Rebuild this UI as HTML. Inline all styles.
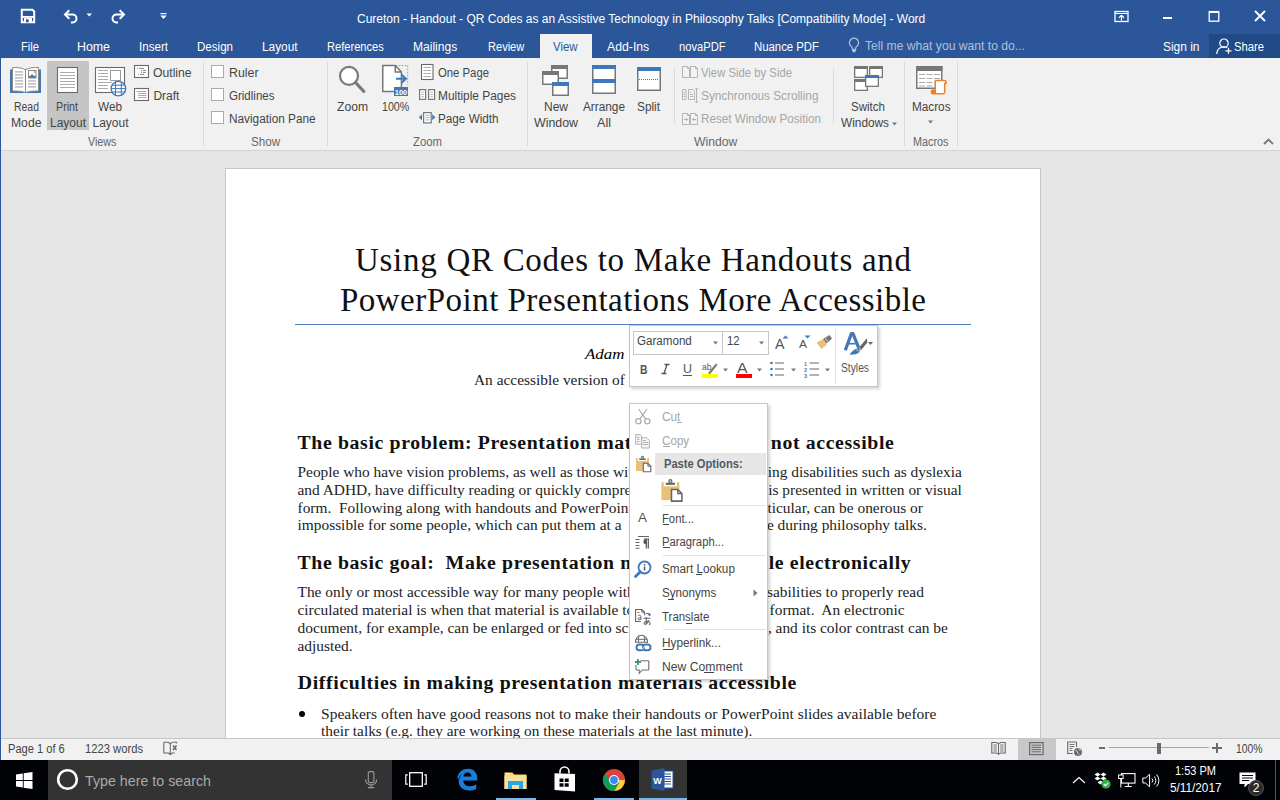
<!DOCTYPE html><html><head><meta charset="utf-8"><style>
html,body{margin:0;padding:0;width:1280px;height:800px;overflow:hidden;background:#fff;position:relative}
.t{position:absolute;white-space:pre;font-family:"Liberation Sans",sans-serif}
.r{position:absolute}
.s{position:absolute;overflow:visible}
</style></head><body>
<div class="r" style="left:0px;top:0px;width:1280px;height:58px;background:#2B579A;"></div>
<svg class="s" style="left:20px;top:8px" width="16" height="16" viewBox="0 0 16 16"><path d="M1.8 1.8h10.7l1.7 1.7v10.7H1.8z" fill="none" stroke="#fff" stroke-width="2"/><rect x="1" y="8" width="14" height="1.8" fill="#fff"/><rect x="4" y="10" width="8" height="5" fill="#fff"/><rect x="6" y="11.3" width="2.6" height="3" fill="#2B579A"/></svg><svg class="s" style="left:63px;top:8px" width="16" height="16" viewBox="0 0 16 16"><path d="M3 6.5h6.5a4 4 0 0 1 0 8H8" fill="none" stroke="#fff" stroke-width="2"/><path d="M6.3 2.2L2 6.5l4.3 4.3" fill="none" stroke="#fff" stroke-width="2"/></svg><svg class="s" style="left:86px;top:13px" width="7" height="4" viewBox="0 0 7 4"><path d="M0.5 0.5h5.5l-2.75 3z" fill="#fff"/></svg><svg class="s" style="left:110px;top:8px" width="16" height="16" viewBox="0 0 16 16"><path d="M13 6.5H6.5a4 4 0 0 0 0 8H8" fill="none" stroke="#fff" stroke-width="2"/><path d="M9.7 2.2L14 6.5l-4.3 4.3" fill="none" stroke="#fff" stroke-width="2"/></svg><svg class="s" style="left:160px;top:12px" width="7" height="8" viewBox="0 0 7 8"><rect x="0.5" y="1" width="6" height="1.2" fill="#fff"/><path d="M0.3 3.5h6.4l-3.2 3.4z" fill="#fff"/></svg>
<div class="t" style="left:357.00px;top:12.84px;font-size:12px;line-height:12px;color:#fff;font-family:'Liberation Sans', sans-serif;font-weight:normal;font-style:normal;">Cureton - Handout - QR Codes as an Assistive Technology in Philosophy Talks [Compatibility Mode] - Word</div>
<svg class="s" style="left:1114px;top:10px" width="15" height="12" viewBox="0 0 15 12"><rect x="1" y="1.5" width="13" height="10" fill="none" stroke="#fff" stroke-width="1.3"/><rect x="1" y="3" width="13" height="1" fill="#fff"/><path d="M7.5 5.2l-2.6 2.6M7.5 5.2l2.6 2.6M7.5 5.5v5" stroke="#fff" stroke-width="1.2" fill="none"/></svg><div class="r" style="left:1163px;top:17px;width:9px;height:2px;background:#fff;"></div><svg class="s" style="left:1208px;top:10px" width="12" height="12" viewBox="0 0 12 12"><rect x="1.2" y="1.6" width="9.6" height="9.6" fill="none" stroke="#fff" stroke-width="1.3"/><rect x="1" y="1" width="10" height="2" fill="#fff"/></svg><svg class="s" style="left:1254px;top:10px" width="12" height="12" viewBox="0 0 12 12"><path d="M1 1l10 10M11 1l-10 10" stroke="#fff" stroke-width="1.8"/></svg>
<div class="r" style="left:540px;top:34px;width:52px;height:24px;background:#F1F1F1;"></div>
<div class="t" style="left:21.00px;top:40.84px;font-size:12px;line-height:12px;color:#fff;font-family:'Liberation Sans', sans-serif;font-weight:normal;font-style:normal;transform:scaleX(0.9309);transform-origin:0 0;">File</div>
<div class="t" style="left:77.00px;top:40.84px;font-size:12px;line-height:12px;color:#fff;font-family:'Liberation Sans', sans-serif;font-weight:normal;font-style:normal;transform:scaleX(1.0309);transform-origin:0 0;">Home</div>
<div class="t" style="left:139.00px;top:40.84px;font-size:12px;line-height:12px;color:#fff;font-family:'Liberation Sans', sans-serif;font-weight:normal;font-style:normal;transform:scaleX(0.9663);transform-origin:0 0;">Insert</div>
<div class="t" style="left:197.00px;top:40.84px;font-size:12px;line-height:12px;color:#fff;font-family:'Liberation Sans', sans-serif;font-weight:normal;font-style:normal;transform:scaleX(0.9638);transform-origin:0 0;">Design</div>
<div class="t" style="left:262.00px;top:40.84px;font-size:12px;line-height:12px;color:#fff;font-family:'Liberation Sans', sans-serif;font-weight:normal;font-style:normal;transform:scaleX(0.9853);transform-origin:0 0;">Layout</div>
<div class="t" style="left:327.00px;top:40.84px;font-size:12px;line-height:12px;color:#fff;font-family:'Liberation Sans', sans-serif;font-weight:normal;font-style:normal;transform:scaleX(0.9248);transform-origin:0 0;">References</div>
<div class="t" style="left:413.25px;top:40.84px;font-size:12px;line-height:12px;color:#fff;font-family:'Liberation Sans', sans-serif;font-weight:normal;font-style:normal;transform:scaleX(1.0053);transform-origin:0 0;">Mailings</div>
<div class="t" style="left:487.50px;top:40.84px;font-size:12px;line-height:12px;color:#fff;font-family:'Liberation Sans', sans-serif;font-weight:normal;font-style:normal;transform:scaleX(0.9213);transform-origin:0 0;">Review</div>
<div class="t" style="left:553.00px;top:40.84px;font-size:12px;line-height:12px;color:#2B579A;font-family:'Liberation Sans', sans-serif;font-weight:normal;font-style:normal;transform:scaleX(0.9499);transform-origin:0 0;">View</div>
<div class="t" style="left:607.00px;top:40.84px;font-size:12px;line-height:12px;color:#fff;font-family:'Liberation Sans', sans-serif;font-weight:normal;font-style:normal;transform:scaleX(1.0216);transform-origin:0 0;">Add-Ins</div>
<div class="t" style="left:678.50px;top:40.84px;font-size:12px;line-height:12px;color:#fff;font-family:'Liberation Sans', sans-serif;font-weight:normal;font-style:normal;transform:scaleX(0.9296);transform-origin:0 0;">novaPDF</div>
<div class="t" style="left:754.00px;top:40.84px;font-size:12px;line-height:12px;color:#fff;font-family:'Liberation Sans', sans-serif;font-weight:normal;font-style:normal;transform:scaleX(0.9462);transform-origin:0 0;">Nuance PDF</div>
<div class="t" style="left:865.00px;top:39.84px;font-size:12px;line-height:12px;color:#AEC0DC;font-family:'Liberation Sans', sans-serif;font-weight:normal;font-style:normal;transform:scaleX(1.0121);transform-origin:0 0;">Tell me what you want to do...</div>
<div class="t" style="left:1162.50px;top:40.84px;font-size:12px;line-height:12px;color:#fff;font-family:'Liberation Sans', sans-serif;font-weight:normal;font-style:normal;transform:scaleX(0.9948);transform-origin:0 0;">Sign in</div>
<div class="r" style="left:1209px;top:34px;width:71px;height:24px;background:#1F4A85;"></div>
<div class="t" style="left:1234.00px;top:40.84px;font-size:12px;line-height:12px;color:#fff;font-family:'Liberation Sans', sans-serif;font-weight:normal;font-style:normal;transform:scaleX(0.9369);transform-origin:0 0;">Share</div>
<svg class="s" style="left:848px;top:37px" width="12" height="16" viewBox="0 0 12 16"><path d="M6 1.2a4.5 4.5 0 0 0-2.6 8.2c.6.5.9 1.1.9 1.9v1h3.4v-1c0-.8.3-1.4.9-1.9A4.5 4.5 0 0 0 6 1.2z" fill="none" stroke="#AEC0DC" stroke-width="1.2"/><path d="M4 13.6h4M4.6 14.8h2.8" stroke="#AEC0DC" stroke-width="1.1"/></svg><svg class="s" style="left:1216px;top:38px" width="16" height="17" viewBox="0 0 16 17"><circle cx="8" cy="5.2" r="4.2" fill="none" stroke="#fff" stroke-width="1.2"/><path d="M0.8 16a7.2 7.2 0 0 1 10.5-6.4" fill="none" stroke="#fff" stroke-width="1.2"/><path d="M9.5 12.8h6M12.5 9.8v6" stroke="#fff" stroke-width="1.2"/></svg>
<div class="r" style="left:0px;top:58px;width:1280px;height:92px;background:#F1F1F1;"></div>
<div class="r" style="left:0px;top:150px;width:1280px;height:1px;background:#D5D5D5;"></div>
<div class="r" style="left:0px;top:58px;width:1px;height:702px;background:#2B579A;"></div>
<div class="r" style="left:47px;top:61px;width:42px;height:69px;background:#C5C5C5;"></div>
<svg class="s" style="left:10px;top:67px" width="31" height="27" viewBox="0 0 31 27"><path d="M0 2.5h31v23.5H0z" fill="#3F78B9"/><path d="M2.5 0.5c4 0 9 0 13 2.2c4-2.2 9-2.2 13-2.2v23.5c-4 0-9 0-13 1.5c-4-1.5-9-1.5-13-1.5z" fill="#fff" stroke="#8A8A8A" stroke-width="1"/><path d="M15.5 2.7v22.8" stroke="#8A8A8A" stroke-width="1"/><path d="M5 4.9H13" stroke="#ABABAB" stroke-width="1.2"/><path d="M5 7.9H13" stroke="#ABABAB" stroke-width="1.2"/><path d="M5 10.9H13" stroke="#ABABAB" stroke-width="1.2"/><path d="M5 13.9H13" stroke="#ABABAB" stroke-width="1.2"/><path d="M5 16.9H13" stroke="#ABABAB" stroke-width="1.2"/><path d="M5 19.9H13" stroke="#ABABAB" stroke-width="1.2"/><path d="M18 13.9H26" stroke="#ABABAB" stroke-width="1.2"/><path d="M18 16.9H26" stroke="#ABABAB" stroke-width="1.2"/><path d="M18 19.9H26" stroke="#ABABAB" stroke-width="1.2"/><rect x="18.5" y="3.5" width="7.5" height="7.5" fill="#fff" stroke="#8A8A8A" stroke-width="1"/><path d="M19 10.5l3-3.5 2.5 2.5 1.3-1v2z" fill="#3F78B9"/><rect x="19" y="9" width="6.5" height="1.6" fill="#3F78B9"/><circle cx="24.5" cy="5" r="1" fill="#F0B050"/></svg><svg class="s" style="left:57px;top:67px" width="22" height="26" viewBox="0 0 22 26"><rect x="0.5" y="0.5" width="20" height="25" fill="#fff" stroke="#6A6A6A" stroke-width="1.1"/><path d="M3 5.5H18" stroke="#ABABAB" stroke-width="1"/><path d="M3 8.5H18" stroke="#ABABAB" stroke-width="1"/><path d="M3 11.5H18" stroke="#ABABAB" stroke-width="1"/><path d="M3 14.5H18" stroke="#ABABAB" stroke-width="1"/><path d="M3 17.5H18" stroke="#ABABAB" stroke-width="1"/><path d="M3 20.5H18" stroke="#ABABAB" stroke-width="1"/></svg><svg class="s" style="left:95px;top:67px" width="32" height="30" viewBox="0 0 32 30"><rect x="0.5" y="0.5" width="29" height="25" fill="#fff" stroke="#6A6A6A" stroke-width="1.1"/><path d="M3 3.5H13" stroke="#ABABAB" stroke-width="1"/><path d="M3 6.5H13" stroke="#ABABAB" stroke-width="1"/><path d="M3 9.5H13" stroke="#ABABAB" stroke-width="1"/><path d="M3 12.5H13" stroke="#ABABAB" stroke-width="1"/><path d="M3 18.5H13" stroke="#ABABAB" stroke-width="1"/><path d="M3 21.5H13" stroke="#ABABAB" stroke-width="1"/><path d="M3 15.5H17" stroke="#ABABAB" stroke-width="1"/><rect x="15.5" y="3.5" width="10" height="10" fill="#fff" stroke="#9A9A9A" stroke-width="1"/><circle cx="23.4" cy="21.6" r="7.3" fill="#fff" stroke="#3F78B9" stroke-width="1.3"/><path d="M16.2 21.6h14.4M17.2 18.2h12.4M17.2 25h12.4M20.5 14.8v13.6M26.3 14.8v13.6" stroke="#3F78B9" stroke-width="1"/></svg><svg class="s" style="left:134px;top:65px" width="15" height="13" viewBox="0 0 15 13"><rect x="0.5" y="0.5" width="14" height="12" fill="#fff" stroke="#6A6A6A" stroke-width="1.1"/><path d="M2.8 3.4h0.9M5 3.4h5M7 5.4h0.9M9 5.4h3M7 7.4h0.9M9 7.4h3M3.8 9.4h0.9M6 9.4h4" stroke="#888" stroke-width="1"/></svg><svg class="s" style="left:134px;top:88px" width="15" height="13" viewBox="0 0 15 13"><rect x="0.5" y="0.5" width="14" height="12" fill="#fff" stroke="#6A6A6A" stroke-width="1.1"/><path d="M2.5 3.5H12.5" stroke="#ABABAB" stroke-width="1"/><path d="M4 5.5H12.5" stroke="#ABABAB" stroke-width="1"/><path d="M4 7.5H12.5" stroke="#ABABAB" stroke-width="1"/><path d="M4 9.5H12.5" stroke="#ABABAB" stroke-width="1"/></svg><div class="r" style="left:211px;top:65px;width:13px;height:13px;background:#fff;box-sizing:border-box;border:1px solid #ABABAB"></div><div class="r" style="left:211px;top:88px;width:13px;height:13px;background:#fff;box-sizing:border-box;border:1px solid #ABABAB"></div><div class="r" style="left:211px;top:111px;width:13px;height:13px;background:#fff;box-sizing:border-box;border:1px solid #ABABAB"></div><svg class="s" style="left:338px;top:65px" width="28" height="29" viewBox="0 0 28 29"><circle cx="11" cy="10.8" r="9" fill="#fff" stroke="#7A7A7A" stroke-width="2.2"/><path d="M17.5 17.5l8.3 8.8" stroke="#7A7A7A" stroke-width="3.2" stroke-linecap="round"/></svg><svg class="s" style="left:381px;top:64px" width="28" height="33" viewBox="0 0 28 33"><path d="M1.75 1.5h12.5l6.2 6.5v19.5H1.75z" fill="#fff" stroke="#777" stroke-width="1.5"/><path d="M14.25 1.5v6.5h6.2" fill="none" stroke="#777" stroke-width="1.5"/><path d="M15 1.5h11.7v19" fill="none" stroke="#999" stroke-width="1" stroke-dasharray="1.5 1.5"/><path d="M15 14.8h9.5M20.5 10.8l4.5 4-4.5 4" fill="none" stroke="#3F78B9" stroke-width="2"/><rect x="13" y="23" width="14" height="9" fill="#3F78B9"/><text x="20" y="30.6" font-family="Liberation Sans" font-weight="bold" font-size="7.6" fill="#fff" text-anchor="middle">100</text></svg><svg class="s" style="left:421px;top:64px" width="13" height="16" viewBox="0 0 13 16"><rect x="0.5" y="0.5" width="11.5" height="15" fill="#fff" stroke="#6A6A6A" stroke-width="1.1"/><path d="M2.5 3.5H10" stroke="#ABABAB" stroke-width="1"/><path d="M2.5 6.5H10" stroke="#ABABAB" stroke-width="1"/><path d="M2.5 9.5H10" stroke="#ABABAB" stroke-width="1"/><path d="M2.5 12.5H10" stroke="#ABABAB" stroke-width="1"/></svg><svg class="s" style="left:419px;top:89px" width="17" height="11" viewBox="0 0 17 11"><rect x="0.6" y="0.6" width="6" height="9.8" fill="#fff" stroke="#777" stroke-width="1.2"/><rect x="9.6" y="0.6" width="6" height="9.8" fill="#fff" stroke="#777" stroke-width="1.2"/><path d="M2.3 3.2H4.9" stroke="#ABABAB" stroke-width="0.9"/><path d="M2.3 5.5H4.9" stroke="#ABABAB" stroke-width="0.9"/><path d="M2.3 7.8H4.9" stroke="#ABABAB" stroke-width="0.9"/><path d="M11.3 3.2H13.9" stroke="#ABABAB" stroke-width="0.9"/><path d="M11.3 5.5H13.9" stroke="#ABABAB" stroke-width="0.9"/><path d="M11.3 7.8H13.9" stroke="#ABABAB" stroke-width="0.9"/></svg><svg class="s" style="left:418px;top:111px" width="18" height="13" viewBox="0 0 18 13"><rect x="5.6" y="1.6" width="7.6" height="10.3" fill="#fff" stroke="#777" stroke-width="1.2"/><path d="M7.3 4.3H11.5" stroke="#ABABAB" stroke-width="0.9"/><path d="M7.3 6.6H11.5" stroke="#ABABAB" stroke-width="0.9"/><path d="M7.3 8.9H11.5" stroke="#ABABAB" stroke-width="0.9"/><path d="M0.8 6.2l3.2-3v6z M17.4 6.2l-3.2-3v6z" fill="#3F78B9"/></svg><svg class="s" style="left:542px;top:65px" width="28" height="32" viewBox="0 0 28 32"><rect x="9.75" y="0.75" width="15.5" height="12.5" fill="#fff" stroke="#777" stroke-width="1.5"/><rect x="9" y="0" width="17" height="4" fill="#777"/><rect x="0.75" y="6.75" width="15.5" height="12.5" fill="#fff" stroke="#777" stroke-width="1.5"/><rect x="0" y="6" width="17" height="4" fill="#777"/><rect x="10.75" y="17.75" width="15.5" height="12.5" fill="#fff" stroke="#777" stroke-width="1.5"/><rect x="10" y="17" width="17" height="4" fill="#3F78B9"/></svg><svg class="s" style="left:592px;top:65px" width="24" height="29" viewBox="0 0 24 29"><rect x="0.75" y="0.75" width="22.5" height="27.5" fill="#fff" stroke="#777" stroke-width="1.5"/><rect x="0" y="0" width="24" height="4" fill="#3F78B9"/><rect x="0" y="14" width="24" height="4" fill="#3F78B9"/></svg><svg class="s" style="left:637px;top:67px" width="24" height="24" viewBox="0 0 24 24"><rect x="0.75" y="0.75" width="22.5" height="22.5" fill="#fff" stroke="#777" stroke-width="1.5"/><rect x="0" y="0" width="24" height="4" fill="#3F78B9"/><path d="M2 12.5H22" stroke="#3F78B9" stroke-width="1" stroke-dasharray="1 1"/></svg><svg class="s" style="left:681px;top:65px" width="18" height="13" viewBox="0 0 18 13"><path d="M1.5 1.5h5l2 2v9h-7z" fill="#F5F2F5" stroke="#B4B4B4" stroke-width="1"/><path d="M6.5 1.5v2h2" fill="none" stroke="#B4B4B4" stroke-width="1"/><path d="M9.5 1.5h5l2 2v9h-7z" fill="#F5F2F5" stroke="#B4B4B4" stroke-width="1"/><path d="M14.5 1.5v2h2" fill="none" stroke="#B4B4B4" stroke-width="1"/></svg><svg class="s" style="left:681px;top:87px" width="18" height="17" viewBox="0 0 18 17"><path d="M1.5 2.5h3.5v10H1.5z" fill="#F5F2F5" stroke="#B4B4B4" stroke-width="1"/><path d="M2.5 5.5h1.5M2.5 7.5h1.5M2.5 9.5h1.5" stroke="#B4B4B4" stroke-width="1"/><path d="M7.5 2.5h4l2 2v8h-6z" fill="#F5F2F5" stroke="#B4B4B4" stroke-width="1"/><path d="M9 7.5h3M9 9.5h3M9 5.5h1" stroke="#B4B4B4" stroke-width="1"/><path d="M15.5 1v15M14 2.5l1.5-1.5 1.5 1.5M14 14.5l1.5 1.5 1.5-1.5" fill="none" stroke="#B4B4B4" stroke-width="1"/></svg><svg class="s" style="left:681px;top:112px" width="18" height="13" viewBox="0 0 18 13"><path d="M1.5 1.5h5l2 2v9h-7z" fill="#F5F2F5" stroke="#B4B4B4" stroke-width="1"/><path d="M6.5 1.5v2h2" fill="none" stroke="#B4B4B4" stroke-width="1"/><path d="M9.5 1.5h5l2 2v9h-7z" fill="#F5F2F5" stroke="#B4B4B4" stroke-width="1"/><path d="M14.5 1.5v2h2" fill="none" stroke="#B4B4B4" stroke-width="1"/><path d="M3 7.5h4M5.5 6v3M11 7.5h4M12.5 6v3" stroke="#B4B4B4" stroke-width="1"/></svg><svg class="s" style="left:853px;top:65px" width="31" height="27" viewBox="0 0 31 27"><rect x="1.65" y="1.65" width="12.7" height="10.7" fill="#fff" stroke="#777" stroke-width="1.3"/><rect x="1" y="1" width="14" height="3" fill="#777"/><rect x="16.65" y="1.65" width="12.7" height="10.7" fill="#fff" stroke="#777" stroke-width="1.3"/><rect x="16" y="1" width="14" height="3" fill="#777"/><rect x="1.65" y="14.65" width="12.7" height="10.7" fill="#fff" stroke="#777" stroke-width="1.3"/><rect x="1" y="14" width="14" height="3" fill="#777"/><rect x="12.65" y="10.65" width="12.7" height="10.7" fill="#fff" stroke="#777" stroke-width="1.3"/><rect x="12" y="10" width="14" height="3" fill="#3F78B9"/></svg><svg class="s" style="left:915px;top:65px" width="33" height="30" viewBox="0 0 33 30"><rect x="1.75" y="1.75" width="25" height="21.5" fill="#fff" stroke="#777" stroke-width="1.5"/><rect x="1" y="1" width="26.5" height="5" fill="#777"/><path d="M4 9.5H10" stroke="#ABABAB" stroke-width="1"/><path d="M4 13.5H10" stroke="#ABABAB" stroke-width="1"/><path d="M4 17.5H10" stroke="#ABABAB" stroke-width="1"/><path d="M4 21H10" stroke="#ABABAB" stroke-width="1"/><path d="M11.5 9.5H17.5" stroke="#ABABAB" stroke-width="1"/><path d="M11.5 13.5H17.5" stroke="#ABABAB" stroke-width="1"/><path d="M11.5 17.5H17.5" stroke="#ABABAB" stroke-width="1"/><path d="M11.5 21H17.5" stroke="#ABABAB" stroke-width="1"/><path d="M19 9.5H25" stroke="#ABABAB" stroke-width="1"/><path d="M19 13.5H25" stroke="#ABABAB" stroke-width="1"/><path d="M20 15.5h9.5a1.5 1.5 0 0 1 1.5 1.5v1.5h-1.3v8.5a1.8 1.8 0 0 1-1.8 1.8h-9.5a1.8 1.8 0 0 1-1.8-1.8v-1h3.6v-10.5z" fill="#fff" stroke="#E8832A" stroke-width="1.6"/><rect x="16.5" y="24.5" width="4.5" height="3.5" fill="#E8832A"/></svg><svg class="s" style="left:892px;top:122px" width="6" height="4" viewBox="0 0 6 4"><path d="M0 0.5h5l-2.5 3z" fill="#777"/></svg><svg class="s" style="left:928px;top:120px" width="6" height="4" viewBox="0 0 6 4"><path d="M0 0.5h5l-2.5 3z" fill="#777"/></svg><svg class="s" style="left:1263px;top:137px" width="11" height="9" viewBox="0 0 11 9"><path d="M1 7l4.5-4.5L10 7" fill="none" stroke="#777" stroke-width="1.8"/></svg>
<div class="t" style="left:13.60px;top:100.84px;font-size:12px;line-height:12px;color:#444444;font-family:'Liberation Sans', sans-serif;font-weight:normal;font-style:normal;transform:scaleX(0.8715);transform-origin:0 0;">Read</div>
<div class="t" style="left:10.60px;top:116.84px;font-size:12px;line-height:12px;color:#444444;font-family:'Liberation Sans', sans-serif;font-weight:normal;font-style:normal;transform:scaleX(1.0127);transform-origin:0 0;">Mode</div>
<div class="t" style="left:56.00px;top:100.84px;font-size:12px;line-height:12px;color:#444444;font-family:'Liberation Sans', sans-serif;font-weight:normal;font-style:normal;transform:scaleX(0.8916);transform-origin:0 0;">Print</div>
<div class="t" style="left:50.00px;top:116.84px;font-size:12px;line-height:12px;color:#444444;font-family:'Liberation Sans', sans-serif;font-weight:normal;font-style:normal;">Layout</div>
<div class="t" style="left:98.00px;top:100.84px;font-size:12px;line-height:12px;color:#444444;font-family:'Liberation Sans', sans-serif;font-weight:normal;font-style:normal;transform:scaleX(0.9813);transform-origin:0 0;">Web</div>
<div class="t" style="left:92.50px;top:116.84px;font-size:12px;line-height:12px;color:#444444;font-family:'Liberation Sans', sans-serif;font-weight:normal;font-style:normal;">Layout</div>
<div class="t" style="left:153.40px;top:66.84px;font-size:12px;line-height:12px;color:#444444;font-family:'Liberation Sans', sans-serif;font-weight:normal;font-style:normal;transform:scaleX(1.0152);transform-origin:0 0;">Outline</div>
<div class="t" style="left:153.40px;top:89.84px;font-size:12px;line-height:12px;color:#444444;font-family:'Liberation Sans', sans-serif;font-weight:normal;font-style:normal;">Draft</div>
<div class="t" style="left:87.50px;top:135.84px;font-size:12px;line-height:12px;color:#666666;font-family:'Liberation Sans', sans-serif;font-weight:normal;font-style:normal;transform:scaleX(0.8964);transform-origin:0 0;">Views</div>
<div class="r" style="left:203px;top:62px;width:1px;height:84px;background:#DADADA;"></div>
<div class="t" style="left:229.40px;top:66.84px;font-size:12px;line-height:12px;color:#444444;font-family:'Liberation Sans', sans-serif;font-weight:normal;font-style:normal;transform:scaleX(1.0287);transform-origin:0 0;">Ruler</div>
<div class="t" style="left:229.40px;top:89.84px;font-size:12px;line-height:12px;color:#444444;font-family:'Liberation Sans', sans-serif;font-weight:normal;font-style:normal;transform:scaleX(0.9609);transform-origin:0 0;">Gridlines</div>
<div class="t" style="left:229.40px;top:112.84px;font-size:12px;line-height:12px;color:#444444;font-family:'Liberation Sans', sans-serif;font-weight:normal;font-style:normal;transform:scaleX(0.9834);transform-origin:0 0;">Navigation Pane</div>
<div class="t" style="left:251.00px;top:135.84px;font-size:12px;line-height:12px;color:#666666;font-family:'Liberation Sans', sans-serif;font-weight:normal;font-style:normal;transform:scaleX(0.9661);transform-origin:0 0;">Show</div>
<div class="r" style="left:327px;top:62px;width:1px;height:84px;background:#DADADA;"></div>
<div class="t" style="left:337.00px;top:100.84px;font-size:12px;line-height:12px;color:#444444;font-family:'Liberation Sans', sans-serif;font-weight:normal;font-style:normal;transform:scaleX(1.0106);transform-origin:0 0;">Zoom</div>
<div class="t" style="left:381.50px;top:100.84px;font-size:12px;line-height:12px;color:#444444;font-family:'Liberation Sans', sans-serif;font-weight:normal;font-style:normal;transform:scaleX(0.8895);transform-origin:0 0;">100%</div>
<div class="t" style="left:438.00px;top:66.84px;font-size:12px;line-height:12px;color:#444444;font-family:'Liberation Sans', sans-serif;font-weight:normal;font-style:normal;transform:scaleX(0.9437);transform-origin:0 0;">One Page</div>
<div class="t" style="left:438.00px;top:89.84px;font-size:12px;line-height:12px;color:#444444;font-family:'Liberation Sans', sans-serif;font-weight:normal;font-style:normal;transform:scaleX(0.9910);transform-origin:0 0;">Multiple Pages</div>
<div class="t" style="left:438.00px;top:112.84px;font-size:12px;line-height:12px;color:#444444;font-family:'Liberation Sans', sans-serif;font-weight:normal;font-style:normal;transform:scaleX(0.9769);transform-origin:0 0;">Page Width</div>
<div class="t" style="left:412.70px;top:135.84px;font-size:12px;line-height:12px;color:#666666;font-family:'Liberation Sans', sans-serif;font-weight:normal;font-style:normal;transform:scaleX(0.9454);transform-origin:0 0;">Zoom</div>
<div class="r" style="left:527px;top:62px;width:1px;height:84px;background:#DADADA;"></div>
<div class="t" style="left:544.00px;top:100.84px;font-size:12px;line-height:12px;color:#444444;font-family:'Liberation Sans', sans-serif;font-weight:normal;font-style:normal;">New</div>
<div class="t" style="left:534.00px;top:116.84px;font-size:12px;line-height:12px;color:#444444;font-family:'Liberation Sans', sans-serif;font-weight:normal;font-style:normal;transform:scaleX(1.0309);transform-origin:0 0;">Window</div>
<div class="t" style="left:583.00px;top:100.84px;font-size:12px;line-height:12px;color:#444444;font-family:'Liberation Sans', sans-serif;font-weight:normal;font-style:normal;transform:scaleX(0.9838);transform-origin:0 0;">Arrange</div>
<div class="t" style="left:597.00px;top:116.84px;font-size:12px;line-height:12px;color:#444444;font-family:'Liberation Sans', sans-serif;font-weight:normal;font-style:normal;transform:scaleX(1.0498);transform-origin:0 0;">All</div>
<div class="t" style="left:637.00px;top:100.84px;font-size:12px;line-height:12px;color:#444444;font-family:'Liberation Sans', sans-serif;font-weight:normal;font-style:normal;transform:scaleX(0.9853);transform-origin:0 0;">Split</div>
<div class="r" style="left:674px;top:68px;width:1px;height:55px;background:#DADADA;"></div>
<div class="t" style="left:701.00px;top:66.84px;font-size:12px;line-height:12px;color:#A6A6A6;font-family:'Liberation Sans', sans-serif;font-weight:normal;font-style:normal;transform:scaleX(0.9430);transform-origin:0 0;">View Side by Side</div>
<div class="t" style="left:701.00px;top:89.84px;font-size:12px;line-height:12px;color:#A6A6A6;font-family:'Liberation Sans', sans-serif;font-weight:normal;font-style:normal;transform:scaleX(0.9841);transform-origin:0 0;">Synchronous Scrolling</div>
<div class="t" style="left:701.00px;top:112.84px;font-size:12px;line-height:12px;color:#A6A6A6;font-family:'Liberation Sans', sans-serif;font-weight:normal;font-style:normal;transform:scaleX(0.9725);transform-origin:0 0;">Reset Window Position</div>
<div class="r" style="left:833px;top:68px;width:1px;height:55px;background:#DADADA;"></div>
<div class="t" style="left:851.00px;top:100.84px;font-size:12px;line-height:12px;color:#444444;font-family:'Liberation Sans', sans-serif;font-weight:normal;font-style:normal;transform:scaleX(0.9620);transform-origin:0 0;">Switch</div>
<div class="t" style="left:840.60px;top:116.84px;font-size:12px;line-height:12px;color:#444444;font-family:'Liberation Sans', sans-serif;font-weight:normal;font-style:normal;transform:scaleX(0.9860);transform-origin:0 0;">Windows</div>
<div class="t" style="left:694.40px;top:135.84px;font-size:12px;line-height:12px;color:#666666;font-family:'Liberation Sans', sans-serif;font-weight:normal;font-style:normal;transform:scaleX(1.0145);transform-origin:0 0;">Window</div>
<div class="r" style="left:904px;top:62px;width:1px;height:84px;background:#DADADA;"></div>
<div class="t" style="left:911.50px;top:100.84px;font-size:12px;line-height:12px;color:#444444;font-family:'Liberation Sans', sans-serif;font-weight:normal;font-style:normal;transform:scaleX(0.9786);transform-origin:0 0;">Macros</div>
<div class="t" style="left:912.50px;top:135.84px;font-size:12px;line-height:12px;color:#666666;font-family:'Liberation Sans', sans-serif;font-weight:normal;font-style:normal;transform:scaleX(0.9024);transform-origin:0 0;">Macros</div>
<div class="r" style="left:957px;top:62px;width:1px;height:84px;background:#DADADA;"></div>
<div class="r" style="left:1px;top:151px;width:1279px;height:587px;background:#E5E5E5;"></div>
<div class="r" style="left:225px;top:168px;width:816px;height:570px;background:#C6C6C6;"></div>
<div class="r" style="left:226px;top:169px;width:814px;height:569px;background:#FFFFFF;"></div>
<div class="t" style="left:355.00px;top:243.66px;font-size:33px;line-height:33px;color:#111;font-family:'Liberation Serif', serif;font-weight:normal;font-style:normal;letter-spacing:0.717px;">Using QR Codes to Make Handouts and</div>
<div class="t" style="left:340.00px;top:283.66px;font-size:33px;line-height:33px;color:#111;font-family:'Liberation Serif', serif;font-weight:normal;font-style:normal;letter-spacing:0.479px;">PowerPoint Presentations More Accessible</div>
<div class="r" style="left:295px;top:324px;width:676px;height:1px;background:#4F81BD;"></div>
<div class="t" style="left:585.00px;top:345.60px;font-size:15.4px;line-height:15.4px;color:#000000;font-family:'Liberation Serif', serif;font-weight:normal;font-style:italic;transform:scaleX(1.0994);transform-origin:0 0;">Adam</div>
<div class="t" style="left:474.00px;top:371.80px;font-size:15.4px;line-height:15.4px;color:#222;font-family:'Liberation Serif', serif;font-weight:normal;font-style:normal;">An accessible version of this</div>
<div class="t" style="left:297.50px;top:637.60px;font-size:15.4px;line-height:15.4px;color:#222;font-family:'Liberation Serif', serif;font-weight:normal;font-style:normal;">adjusted.</div>
<div class="r" style="left:0;top:0;width:630px;height:800px;overflow:hidden"><div class="t" style="left:297.50px;top:432.97px;font-size:19.8px;line-height:19.8px;color:#111;font-family:'Liberation Serif', serif;font-weight:bold;font-style:normal;letter-spacing:0.63px;">The basic problem: Presentation materials</div><div class="t" style="left:297.50px;top:463.70px;font-size:15.4px;line-height:15.4px;color:#222;font-family:'Liberation Serif', serif;font-weight:normal;font-style:normal;">People who have vision problems, as well as those with</div><div class="t" style="left:297.50px;top:481.60px;font-size:15.4px;line-height:15.4px;color:#222;font-family:'Liberation Serif', serif;font-weight:normal;font-style:normal;">and ADHD, have difficulty reading or quickly comprehending</div><div class="t" style="left:297.50px;top:499.60px;font-size:15.4px;line-height:15.4px;color:#222;font-family:'Liberation Serif', serif;font-weight:normal;font-style:normal;">form.  Following along with handouts and PowerPoint</div><div class="t" style="left:297.50px;top:517.10px;font-size:15.4px;line-height:15.4px;color:#222;font-family:'Liberation Serif', serif;font-weight:normal;font-style:normal;">impossible for some people, which can put them at a</div><div class="t" style="left:297.50px;top:552.97px;font-size:19.8px;line-height:19.8px;color:#111;font-family:'Liberation Serif', serif;font-weight:bold;font-style:normal;letter-spacing:0.63px;">The basic goal:  Make presentation materials</div><div class="t" style="left:297.50px;top:584.10px;font-size:15.4px;line-height:15.4px;color:#222;font-family:'Liberation Serif', serif;font-weight:normal;font-style:normal;">The only or most accessible way for many people with</div><div class="t" style="left:297.50px;top:602.10px;font-size:15.4px;line-height:15.4px;color:#222;font-family:'Liberation Serif', serif;font-weight:normal;font-style:normal;">circulated material is when that material is available to</div><div class="t" style="left:297.50px;top:620.10px;font-size:15.4px;line-height:15.4px;color:#222;font-family:'Liberation Serif', serif;font-weight:normal;font-style:normal;">document, for example, can be enlarged or fed into screen</div></div>
<div class="r" style="left:768px;top:0;width:300px;height:800px;overflow:hidden"><div class="t" style="left:-122.13px;top:432.97px;font-size:19.8px;line-height:19.8px;color:#111;font-family:'Liberation Serif', serif;font-weight:bold;font-style:normal;letter-spacing:0.63px;">materials are not accessible</div><div class="t" style="left:-62.19px;top:463.70px;font-size:15.4px;line-height:15.4px;color:#222;font-family:'Liberation Serif', serif;font-weight:normal;font-style:normal;">with learning disabilities such as dyslexia</div><div class="t" style="left:-80.98px;top:481.60px;font-size:15.4px;line-height:15.4px;color:#222;font-family:'Liberation Serif', serif;font-weight:normal;font-style:normal;">material that is presented in written or visual</div><div class="t" style="left:-154.45px;top:499.60px;font-size:15.4px;line-height:15.4px;color:#222;font-family:'Liberation Serif', serif;font-weight:normal;font-style:normal;">PowerPoint slides, in particular, can be onerous or</div><div class="t" style="left:-154.07px;top:517.10px;font-size:15.4px;line-height:15.4px;color:#222;font-family:'Liberation Serif', serif;font-weight:normal;font-style:normal;">a significant disadvantage during philosophy talks.</div><div class="t" style="left:-155.66px;top:552.97px;font-size:19.8px;line-height:19.8px;color:#111;font-family:'Liberation Serif', serif;font-weight:bold;font-style:normal;letter-spacing:0.63px;">materials available electronically</div><div class="t" style="left:-44.15px;top:584.10px;font-size:15.4px;line-height:15.4px;color:#222;font-family:'Liberation Serif', serif;font-weight:normal;font-style:normal;">with disabilities to properly read</div><div class="t" style="left:-129.18px;top:602.10px;font-size:15.4px;line-height:15.4px;color:#222;font-family:'Liberation Serif', serif;font-weight:normal;font-style:normal;">to them in electronic format.  An electronic</div><div class="t" style="left:-146.26px;top:620.10px;font-size:15.4px;line-height:15.4px;color:#222;font-family:'Liberation Serif', serif;font-weight:normal;font-style:normal;">screen reading software, and its color contrast can be</div></div>
<div class="t" style="left:297.80px;top:672.92px;font-size:19.8px;line-height:19.8px;color:#111;font-family:'Liberation Serif', serif;font-weight:bold;font-style:normal;letter-spacing:0.63px;">Difficulties in making presentation materials accessible</div>
<div class="r" style="left:298.5px;top:711px;width:6px;height:6px;border-radius:50%;background:#000"></div>
<div class="t" style="left:321.00px;top:705.85px;font-size:15.4px;line-height:15.4px;color:#222;font-family:'Liberation Serif', serif;font-weight:normal;font-style:normal;transform:scaleX(1.0083);transform-origin:0 0;">Speakers often have good reasons not to make their handouts or PowerPoint slides available before</div>
<div class="t" style="left:321.00px;top:723.35px;font-size:15.4px;line-height:15.4px;color:#222;font-family:'Liberation Serif', serif;font-weight:normal;font-style:normal;transform:scaleX(0.9941);transform-origin:0 0;">their talks (e.g. they are working on these materials at the last minute).</div>
<div class="r" style="left:629px;top:325px;width:247px;height:60px;border:1px solid #C6C6C6;background:#fff;box-shadow:2px 2px 3px rgba(0,0,0,0.18)"></div><div class="r" style="left:633px;top:331px;width:88px;height:22px;border:1px solid #C6C6C6;background:#fff"></div><div class="r" style="left:722px;top:331px;width:45px;height:22px;border:1px solid #C6C6C6;background:#fff"></div><div class="t" style="left:636.70px;top:335.44px;font-size:12px;line-height:12px;color:#444444;font-family:'Liberation Sans', sans-serif;font-weight:normal;font-style:normal;transform:scaleX(0.9666);transform-origin:0 0;">Garamond</div><div class="t" style="left:726.50px;top:335.44px;font-size:12px;line-height:12px;color:#444444;font-family:'Liberation Sans', sans-serif;font-weight:normal;font-style:normal;transform:scaleX(0.9365);transform-origin:0 0;">12</div><svg class="s" style="left:713px;top:341px" width="6" height="4" viewBox="0 0 6 4"><path d="M0 0.5h5l-2.5 3z" fill="#777"/></svg><svg class="s" style="left:759px;top:341px" width="6" height="4" viewBox="0 0 6 4"><path d="M0 0.5h5l-2.5 3z" fill="#777"/></svg><div class="t" style="left:775.00px;top:337.15px;font-size:14px;line-height:14px;color:#555;font-family:'Liberation Sans', sans-serif;font-weight:normal;font-style:normal;transform:scaleX(1.0173);transform-origin:0 0;">A</div><svg class="s" style="left:782px;top:335px" width="7" height="4" viewBox="0 0 7 4"><path d="M0.5 3.5h6l-3-3z" fill="#3F78B9"/></svg><div class="t" style="left:798.50px;top:339.27px;font-size:11.5px;line-height:11.5px;color:#555;font-family:'Liberation Sans', sans-serif;font-weight:normal;font-style:normal;transform:scaleX(1.0430);transform-origin:0 0;">A</div><svg class="s" style="left:804px;top:335px" width="7" height="4" viewBox="0 0 7 4"><path d="M0.5 0.5h6l-3 3z" fill="#3F78B9"/></svg><svg class="s" style="left:816px;top:335px" width="17" height="15" viewBox="0 0 17 15"><path d="M0.5 7.5l6.5-3.5 4 5.5-5.5 4.5z" fill="#E8C07A"/><path d="M7 4l6.5-4 2.5 3.5-5.5 5z" fill="#777"/><path d="M9.5 3.5l2.2 3" stroke="#fff" stroke-width="0.8"/></svg><div class="r" style="left:835px;top:329px;width:1px;height:55px;background:#E1E1E1;"></div><svg class="s" style="left:838px;top:328px" width="40" height="30" viewBox="0 0 40 30"><path d="M7.3 22.3L13.4 5.6h1.6l6 15" fill="none" stroke="#3F78B9" stroke-width="3.2" stroke-linejoin="round"/><path d="M10.5 15.7h7" stroke="#3F78B9" stroke-width="1.6"/><path d="M20.5 20.8l1.7-2.5 6.8-8.3.2 4.8-6.2 7.5z" fill="#666"/><path d="M21 19.6l1.8 1.7" stroke="#fff" stroke-width="0.8"/><path d="M11.5 26.6c2.5-3.5 5.5-6.2 8.5-6.2 2.3.3 2.3 3 .3 4.6-1.8 1.3-5.3 1.8-8.8 1.6z" fill="#3F78B9"/><path d="M18.5 22.2c.8-.6 1.6-.2 1.2.6" stroke="#fff" stroke-width="0.8" fill="none"/><path d="M30 14h5l-2.5 3z" fill="#666"/></svg><div class="t" style="left:841.40px;top:362.14px;font-size:12px;line-height:12px;color:#555;font-family:'Liberation Sans', sans-serif;font-weight:normal;font-style:normal;transform:scaleX(0.8568);transform-origin:0 0;">Styles</div><div class="t" style="left:639.70px;top:363.84px;font-size:12px;line-height:12px;color:#555;font-family:'Liberation Sans', sans-serif;font-weight:bold;font-style:normal;transform:scaleX(0.8654);transform-origin:0 0;">B</div><svg class="s" style="left:661px;top:364px" width="9" height="11" viewBox="0 0 9 11"><path d="M3.5 0.5h5M0.5 9.5h5M6 0.5l-3 9" stroke="#555" stroke-width="1.3" fill="none"/></svg><div class="t" style="left:683.00px;top:362.84px;font-size:12px;line-height:12px;color:#555;font-family:'Liberation Sans', sans-serif;font-weight:normal;font-style:normal;transform:scaleX(1.0385);transform-origin:0 0;">U</div><div class="r" style="left:683px;top:375px;width:9px;height:1px;background:#555;"></div><svg class="s" style="left:702px;top:361px" width="17" height="18" viewBox="0 0 17 18"><text x="0" y="8.5" font-family="Liberation Sans" font-size="8.5" fill="#555">ab</text><path d="M6 12l8-9.5 1.5 1.3-7.5 9.5z" fill="#777"/><path d="M5.5 13l1.5 1.2-1.8.6z" fill="#555"/><rect x="0" y="13" width="16" height="4" fill="#FFFF00"/></svg><svg class="s" style="left:723px;top:368px" width="6" height="4" viewBox="0 0 6 4"><path d="M0 0.5h5l-2.5 3z" fill="#777"/></svg><div class="t" style="left:737.00px;top:361.15px;font-size:14px;line-height:14px;color:#555;font-family:'Liberation Sans', sans-serif;font-weight:normal;font-style:normal;transform:scaleX(1.1244);transform-origin:0 0;">A</div><div class="r" style="left:736px;top:374px;width:16px;height:4px;background:#FF0000;"></div><svg class="s" style="left:757px;top:368px" width="6" height="4" viewBox="0 0 6 4"><path d="M0 0.5h5l-2.5 3z" fill="#777"/></svg><svg class="s" style="left:770px;top:361px" width="15" height="17" viewBox="0 0 15 17"><circle cx="1.5" cy="2" r="1.3" fill="#3F78B9"/><circle cx="1.5" cy="8" r="1.3" fill="#3F78B9"/><circle cx="1.5" cy="14" r="1.3" fill="#3F78B9"/><path d="M5 2h9M5 8h9M5 14h9" stroke="#666" stroke-width="1.2"/></svg><svg class="s" style="left:791px;top:368px" width="6" height="4" viewBox="0 0 6 4"><path d="M0 0.5h5l-2.5 3z" fill="#777"/></svg><svg class="s" style="left:804px;top:360px" width="16" height="18" viewBox="0 0 16 18"><text x="0" y="5.5" font-family="Liberation Sans" font-weight="bold" font-size="5.5" fill="#3F78B9">1</text><text x="0" y="11.5" font-family="Liberation Sans" font-weight="bold" font-size="5.5" fill="#3F78B9">2</text><text x="0" y="17.5" font-family="Liberation Sans" font-weight="bold" font-size="5.5" fill="#3F78B9">3</text><path d="M5.5 3h9.5M5.5 9h9.5M5.5 15h9.5" stroke="#666" stroke-width="1.2"/></svg><svg class="s" style="left:825px;top:368px" width="6" height="4" viewBox="0 0 6 4"><path d="M0 0.5h5l-2.5 3z" fill="#777"/></svg>
<div class="r" style="left:629px;top:403px;width:137px;height:275px;border:1px solid #C6C6C6;background:#fff;box-shadow:2px 2px 3px rgba(0,0,0,0.18)"></div><div class="r" style="left:655px;top:453px;width:111px;height:22px;background:#E6E6E6;"></div><div class="r" style="left:663px;top:505px;width:103px;height:1px;background:#E1E1E1;"></div><div class="r" style="left:663px;top:555px;width:103px;height:1px;background:#E1E1E1;"></div><div class="r" style="left:663px;top:629px;width:103px;height:1px;background:#E1E1E1;"></div><div class="t" style="left:662.40px;top:410.74px;font-size:12px;line-height:12px;color:#A6A6A6;font-family:'Liberation Sans', sans-serif;font-weight:normal;font-style:normal;transform:scaleX(0.9853);transform-origin:0 0;">Cut</div><div class="r" style="left:677px;top:422px;width:4.5px;height:1px;background:#A6A6A6;"></div><div class="t" style="left:662.40px;top:435.14px;font-size:12px;line-height:12px;color:#A6A6A6;font-family:'Liberation Sans', sans-serif;font-weight:normal;font-style:normal;transform:scaleX(0.9709);transform-origin:0 0;">Copy</div><div class="r" style="left:662.5px;top:446px;width:7.5px;height:1px;background:#A6A6A6;"></div><div class="t" style="left:664.40px;top:457.54px;font-size:12px;line-height:12px;color:#505A66;font-family:'Liberation Sans', sans-serif;font-weight:bold;font-style:normal;transform:scaleX(0.9282);transform-origin:0 0;">Paste Options:</div><div class="t" style="left:662.40px;top:512.54px;font-size:12px;line-height:12px;color:#444444;font-family:'Liberation Sans', sans-serif;font-weight:normal;font-style:normal;transform:scaleX(0.9379);transform-origin:0 0;">Font...</div><div class="r" style="left:662.5px;top:524px;width:6px;height:1px;background:#444444;"></div><div class="t" style="left:662.40px;top:536.04px;font-size:12px;line-height:12px;color:#444444;font-family:'Liberation Sans', sans-serif;font-weight:normal;font-style:normal;transform:scaleX(0.9403);transform-origin:0 0;">Paragraph...</div><div class="r" style="left:662.5px;top:547px;width:7px;height:1px;background:#444444;"></div><div class="t" style="left:662.40px;top:562.74px;font-size:12px;line-height:12px;color:#444444;font-family:'Liberation Sans', sans-serif;font-weight:normal;font-style:normal;transform:scaleX(0.9758);transform-origin:0 0;">Smart Lookup</div><div class="r" style="left:696px;top:574px;width:6px;height:1px;background:#444444;"></div><div class="t" style="left:662.40px;top:587.44px;font-size:12px;line-height:12px;color:#444444;font-family:'Liberation Sans', sans-serif;font-weight:normal;font-style:normal;transform:scaleX(0.9711);transform-origin:0 0;">Synonyms</div><div class="r" style="left:668px;top:599px;width:6px;height:1px;background:#444444;"></div><div class="t" style="left:662.40px;top:611.44px;font-size:12px;line-height:12px;color:#444444;font-family:'Liberation Sans', sans-serif;font-weight:normal;font-style:normal;transform:scaleX(0.9541);transform-origin:0 0;">Translate</div><div class="r" style="left:686px;top:623px;width:5.5px;height:1px;background:#444444;"></div><div class="t" style="left:662.40px;top:637.44px;font-size:12px;line-height:12px;color:#444444;font-family:'Liberation Sans', sans-serif;font-weight:normal;font-style:normal;transform:scaleX(0.9814);transform-origin:0 0;">Hyperlink...</div><div class="r" style="left:662.5px;top:649px;width:9px;height:1px;background:#444444;"></div><div class="t" style="left:662.40px;top:660.84px;font-size:12px;line-height:12px;color:#444444;font-family:'Liberation Sans', sans-serif;font-weight:normal;font-style:normal;transform:scaleX(1.0157);transform-origin:0 0;">New Comment</div><div class="r" style="left:704px;top:672px;width:9.5px;height:1px;background:#444444;"></div><svg class="s" style="left:635px;top:408px" width="16" height="17" viewBox="0 0 16 17"><circle cx="3.3" cy="13.3" r="2.6" fill="none" stroke="#B0B0B0" stroke-width="1.3"/><circle cx="12.3" cy="13.3" r="2.6" fill="none" stroke="#B0B0B0" stroke-width="1.3"/><path d="M4.8 11.2L12 1M10.8 11.2L3.6 1" stroke="#B0B0B0" stroke-width="1.3"/></svg><svg class="s" style="left:634px;top:433px" width="17" height="16" viewBox="0 0 17 16"><path d="M1.7 1.6h4.8l1 1v8.6H1.7z" fill="#FAF6FA" stroke="#B0B0B0" stroke-width="1"/><path d="M7.7 4.7h5l2.6 2.6v7.7H7.7z" fill="#FAF6FA" stroke="#B0B0B0" stroke-width="1"/><path d="M3 4.3h2.5M3 6.3h2.5M3 8.5h2.5M9 7.5h3M9 9.5h5M9 11.5h5" stroke="#B0B0B0" stroke-width="1"/></svg><svg class="s" style="left:635px;top:455px" width="19" height="20" viewBox="0 0 19 20"><g transform="scale(1.0)"><path d="M1 3h13v13H1z" fill="#E8C07A"/><path d="M2.7 3h9.5v3H2.7z" fill="#fff"/><circle cx="7.5" cy="2.3" r="1.5" fill="#6A6A6A"/><circle cx="7.5" cy="2.3" r="0.55" fill="#fff"/><path d="M4.2 3.4h6.6v1.6H4.2z" fill="#6A6A6A"/><path d="M8.3 8.3h4.6l2.9 2.9v5.5H8.3z" fill="#fff" stroke="#666" stroke-width="1.1"/><path d="M12.9 8.3v2.9h2.9" fill="none" stroke="#666" stroke-width="1"/></g></svg><svg class="s" style="left:660px;top:478px" width="25" height="27" viewBox="0 0 25 27"><g transform="scale(1.385)"><path d="M1 3h13v13H1z" fill="#E8C07A"/><path d="M2.7 3h9.5v3H2.7z" fill="#fff"/><circle cx="7.5" cy="2.3" r="1.5" fill="#6A6A6A"/><circle cx="7.5" cy="2.3" r="0.55" fill="#fff"/><path d="M4.2 3.4h6.6v1.6H4.2z" fill="#6A6A6A"/><path d="M8.3 8.3h4.6l2.9 2.9v5.5H8.3z" fill="#fff" stroke="#666" stroke-width="1.1"/><path d="M12.9 8.3v2.9h2.9" fill="none" stroke="#666" stroke-width="1"/></g></svg><div class="t" style="left:638.00px;top:512.12px;font-size:12.5px;line-height:12.5px;color:#555;font-family:'Liberation Sans', sans-serif;font-weight:normal;font-style:normal;transform:scaleX(1.0795);transform-origin:0 0;">A</div><svg class="s" style="left:635px;top:535px" width="15" height="14" viewBox="0 0 15 14"><path d="M3 1.5h11M0.5 4.5h4M0.5 7.5h4M0.5 10.5h4M0.5 13.2h4" stroke="#666" stroke-width="1"/><path d="M9 4h5M11.3 4v9.5M13.3 4v9.5" stroke="#555" stroke-width="1.2"/><path d="M11 4a2.6 2.6 0 0 0 0 5.2z" fill="#555"/></svg><svg class="s" style="left:634px;top:560px" width="18" height="18" viewBox="0 0 18 18"><circle cx="10.5" cy="7.5" r="6" fill="#fff" stroke="#3F78B9" stroke-width="1.8"/><path d="M6.3 11.7L1.5 16.5" stroke="#3F78B9" stroke-width="2.8" stroke-linecap="round"/><rect x="9.8" y="6.5" width="1.5" height="4" fill="#555"/><rect x="9.8" y="4" width="1.5" height="1.5" fill="#555"/></svg><svg class="s" style="left:753px;top:589px" width="5" height="8" viewBox="0 0 5 8"><path d="M0.5 0.5l4 3.5-4 3.5z" fill="#777"/></svg><svg class="s" style="left:634px;top:608px" width="18" height="18" viewBox="0 0 18 18"><path d="M6.8 13.5H1.6V1.5h6.2l2.8 2.8v3" fill="none" stroke="#666" stroke-width="1.1"/><path d="M7.8 1.5v2.8h2.8" fill="none" stroke="#666" stroke-width="0.9"/><path d="M3 4.5h2.5" stroke="#E8832A" stroke-width="1.1"/><path d="M4.2 7.6c.6-.4 2.6-.5 2.6.8v3.4M6.8 9.9c-1.8-.3-2.9.2-2.9 1 0 1 1.6 1.1 2.9.2" fill="none" stroke="#666" stroke-width="1"/><path d="M12 5.5h3M14.2 6.6h2.6M15.5 5.3v2.6" stroke="#3F78B9" stroke-width="1.1"/><path d="M9.5 10.2h6.8M12.3 9v7.5M14.7 12.2c-1 2.8-2.8 4.3-4 4-1.2-.3-.6-2.6 1.8-2.8 2.4-.2 3.8.8 3.6 2.2-.1.6-.6 1-1.2 1.1" fill="none" stroke="#666" stroke-width="1.1"/></svg><svg class="s" style="left:634px;top:634px" width="19" height="18" viewBox="0 0 19 18"><path d="M1.5 8.7c0-4.5 2.6-7.5 6-7.5s6 3 6 7.5" fill="none" stroke="#6A6A6A" stroke-width="1.1"/><path d="M1.5 5.3h12M1.5 8.2h12M5 2.5c-.8 1.5-.8 4.5-.2 5.8M10 2.5c.8 1.5.8 4.5.2 5.8" fill="none" stroke="#6A6A6A" stroke-width="1"/><rect x="2.5" y="10.6" width="7.5" height="5.6" rx="2.8" fill="none" stroke="#3F78B9" stroke-width="2"/><rect x="9" y="10.6" width="7.5" height="5.6" rx="2.8" fill="none" stroke="#3F78B9" stroke-width="2"/><path d="M8.3 15.5l2.5-3.5" stroke="#fff" stroke-width="1"/></svg><svg class="s" style="left:634px;top:658px" width="18" height="17" viewBox="0 0 18 17"><path d="M6.5 2.7h7.5c.5 0 .8.3.8.8v7.7c0 .5-.3.8-.8.8h-5.8l-3 3.3v-3.3H2.8c-.5 0-.8-.3-.8-.8V7" fill="none" stroke="#6E6E6E" stroke-width="1.1"/><path d="M4 1v6M1 4h6" stroke="#3A9C74" stroke-width="1.8"/></svg>
<div class="r" style="left:1px;top:738px;width:1279px;height:1px;background:#C6C6C6;"></div>
<div class="r" style="left:1px;top:739px;width:1279px;height:21px;background:#F1F1F1;"></div>
<div class="t" style="left:8.25px;top:742.84px;font-size:12px;line-height:12px;color:#444;font-family:'Liberation Sans', sans-serif;font-weight:normal;font-style:normal;transform:scaleX(0.9245);transform-origin:0 0;">Page 1 of 6</div>
<div class="t" style="left:84.50px;top:742.84px;font-size:12px;line-height:12px;color:#444;font-family:'Liberation Sans', sans-serif;font-weight:normal;font-style:normal;transform:scaleX(0.9349);transform-origin:0 0;">1223 words</div>
<div class="t" style="left:1236.00px;top:742.84px;font-size:12px;line-height:12px;color:#444;font-family:'Liberation Sans', sans-serif;font-weight:normal;font-style:normal;transform:scaleX(0.8634);transform-origin:0 0;">100%</div>
<svg class="s" style="left:163px;top:741px" width="15" height="15" viewBox="0 0 15 15"><path d="M0.8 1.2h4.5l2 1.5 2-1.5h0.3M0.8 1.2v10.8h4.5l2 1.5 2-1.5h2.5" fill="none" stroke="#6A6A6A" stroke-width="1.1"/><path d="M7.3 2.7v10.5M5.8 11.8l1.5 1.8 1.5-1.8" fill="none" stroke="#6A6A6A" stroke-width="1"/><path d="M10 4.5l3.5 4.5M13.5 4.5l-3.5 4.5" stroke="#6A6A6A" stroke-width="1.5"/><path d="M10 1.2h3.5v1.3" fill="none" stroke="#6A6A6A" stroke-width="1.1"/></svg><div class="r" style="left:1018px;top:739px;width:38px;height:21px;background:#C8C8C8;"></div><svg class="s" style="left:991px;top:741px" width="15" height="15" viewBox="0 0 15 15"><path d="M0.8 1.5h4.5l2.2 1.2 2.2-1.2h4.5v10.5h-4.5l-2.2 1.2-2.2-1.2H0.8z" fill="none" stroke="#6A6A6A" stroke-width="1.1"/><path d="M7.5 2.7v10.5" stroke="#6A6A6A" stroke-width="1"/><path d="M2.5 4h3.3M2.5 6h3.3M2.5 8h3.3M2.5 10h3.3M9.2 4h3.3M9.2 6h3.3M9.2 8h3.3M9.2 10h3.3" stroke="#6A6A6A" stroke-width="0.9"/></svg><svg class="s" style="left:1029px;top:742px" width="15" height="14" viewBox="0 0 15 14"><rect x="0.6" y="0.6" width="13.5" height="12" fill="none" stroke="#6A6A6A" stroke-width="1.2"/><path d="M2.5 3.2h9.5M2.5 5.4h9.5M2.5 7.6h9.5M2.5 9.8h9.5" stroke="#6A6A6A" stroke-width="1"/></svg><svg class="s" style="left:1067px;top:741px" width="16" height="16" viewBox="0 0 16 16"><path d="M9.5 1h-8.8v11.5h5" fill="none" stroke="#6A6A6A" stroke-width="1.1"/><path d="M9.5 1v5" stroke="#6A6A6A" stroke-width="1.1"/><path d="M2.5 3.5h5M2.5 5.5h5M2.5 7.5h3M2.5 9.5h3" stroke="#6A6A6A" stroke-width="0.9"/><circle cx="11" cy="11" r="4" fill="#6A6A6A"/><path d="M8.5 9.5c1.5 0 2 1 2 2s1 1 1.5 2M11.5 7.5c0 1 1 1.5 2.5 1.5" stroke="#F1F1F1" stroke-width="0.9" fill="none"/></svg><div class="r" style="left:1099px;top:747px;width:6px;height:2px;background:#6A6A6A;"></div><div class="r" style="left:1109px;top:747px;width:100px;height:1px;background:#A8A8A8;"></div><div class="r" style="left:1157px;top:743px;width:4px;height:11px;background:#6A6A6A;"></div><div class="r" style="left:1212px;top:747px;width:10px;height:2px;background:#6A6A6A;"></div><div class="r" style="left:1216px;top:743px;width:2px;height:10px;background:#6A6A6A;"></div>
<div class="r" style="left:0px;top:760px;width:1280px;height:40px;background:#020307;"></div>
<div class="r" style="left:48px;top:760px;width:344px;height:40px;background:#333333;"></div><div class="r" style="left:639px;top:760px;width:48px;height:40px;background:#333333;"></div><div class="r" style="left:496px;top:798px;width:40px;height:2px;background:#76B9ED;"></div><div class="r" style="left:594px;top:798px;width:40px;height:2px;background:#76B9ED;"></div><div class="r" style="left:639px;top:798px;width:48px;height:2px;background:#76B9ED;"></div><svg class="s" style="left:16px;top:772px" width="17" height="17" viewBox="0 0 17 17"><path d="M0 2.4l6.8-0.95v6.6H0z M7.7 1.3L16.5 0v8.05H7.7z M0 8.9h6.8v6.6L0 14.6z M7.7 8.9h8.8v8.1l-8.8-1.25z" fill="#fff"/></svg><svg class="s" style="left:56px;top:768px" width="24" height="24" viewBox="0 0 24 24"><circle cx="11.5" cy="11.5" r="9.3" fill="none" stroke="#fff" stroke-width="2.6"/></svg><svg class="s" style="left:364px;top:771px" width="15" height="18" viewBox="0 0 15 18"><rect x="4.3" y="0.6" width="5.6" height="11" rx="1.5" fill="none" stroke="#9A9A9A" stroke-width="1.1"/><path d="M1.5 8.5a5.6 5.6 0 0 0 11.2 0M7.1 14.1v2.5M4 16.6h6.2" fill="none" stroke="#9A9A9A" stroke-width="1.1"/></svg><svg class="s" style="left:405px;top:772px" width="22" height="16" viewBox="0 0 22 16"><rect x="4.7" y="0.7" width="12.6" height="13.6" fill="none" stroke="#fff" stroke-width="1.3"/><path d="M2.8 2.8H0.8v9.4h2M19.2 2.8h2v9.4h-2" fill="none" stroke="#fff" stroke-width="1.2"/></svg><svg class="s" style="left:456px;top:768px" width="22" height="23" viewBox="0 0 22 23"><path d="M1.2 10.5C2 4 7 0.8 12 0.8c5.8 0 9.3 4.2 9.3 9.5v2.2H7.3c.2 3.5 2.8 5.8 6.6 5.8 2.5 0 4.6-.8 6.3-2v4.6c-1.8 1.1-4.3 1.7-7 1.7-6.3 0-10.6-4-10.6-9.8 0-3 1.3-5.6 3.6-7.3-1.3 1.4-2.1 3.1-2.4 5z M7.4 8.6h8c0-2.4-1.6-4-3.9-4-2.4 0-3.9 1.7-4.1 4z" fill="#1A7FD8" fill-rule="evenodd"/></svg><svg class="s" style="left:504px;top:770px" width="23" height="20" viewBox="0 0 23 20"><path d="M0.5 2.5h8l1.5 2h12.5v14.5H0.5z" fill="#FFD86B"/><path d="M0.5 5.5h22v13.5H0.5z" fill="#F8E29A"/><path d="M4 11h15v8h-4v-4h-7v4H4z" fill="#2AA5E8"/><rect x="2" y="3" width="4" height="1.3" fill="#fff" opacity="0.7"/></svg><svg class="s" style="left:553px;top:767px" width="23" height="25" viewBox="0 0 23 25"><path d="M7 6.5V4.5a4.5 4.5 0 0 1 9 0v2" fill="none" stroke="#fff" stroke-width="1.6"/><path d="M1.5 6.2l20.5 0.8v17.5l-20.5-1.5z" fill="#fff"/><path d="M6.5 11.5h4v3.5h-4zM11.7 11.5h4v3.5h-4zM6.5 16.2h4v3.5h-4zM11.7 16.2h4v3.5h-4z" fill="#000"/></svg><svg class="s" style="left:602px;top:768px" width="24" height="24" viewBox="0 0 24 24"><circle cx="12" cy="12" r="11" fill="#DB4437"/><path d="M12 12L2.4 17.5A11 11 0 0 0 12.4 23L17.2 14.8z" fill="#0F9D58"/><path d="M12 12h11A11 11 0 0 1 12.4 23L17.2 14.8z" fill="#FFCD40"/><path d="M12 12L2.4 17.5A11 11 0 0 1 3.3 5.2L7.5 12.5z" fill="#0F9D58"/><circle cx="12" cy="12" r="5" fill="#fff"/><circle cx="12" cy="12" r="3.9" fill="#4285F4"/></svg><svg class="s" style="left:651px;top:768px" width="23" height="23" viewBox="0 0 23 23"><path d="M9 3h13v17H9z" fill="#fff" stroke="#2B579A" stroke-width="1"/><path d="M12 6h8M12 8.5h8M12 11h8M12 13.5h8M12 16h8" stroke="#2B579A" stroke-width="1.2"/><path d="M0.5 2.5L13.5 0v23l-13-2.5z" fill="#2B579A"/><text x="2.3" y="15.5" font-family="Liberation Sans" font-weight="bold" font-size="9" fill="#fff">W</text></svg><svg class="s" style="left:1072px;top:776px" width="14" height="8" viewBox="0 0 14 8"><path d="M1 7l6-5.5 6 5.5" fill="none" stroke="#fff" stroke-width="1.2"/></svg><svg class="s" style="left:1094px;top:772px" width="18" height="17" viewBox="0 0 18 17"><path d="M3.5 0.5l3 2-3 2-3-2zM9.5 0.5l3 2-3 2-3-2zM3.5 4.5l3 2-3 2-3-2zM9.5 4.5l3 2-3 2-3-2zM6.5 8.5l3 2-3 2-3-2z" fill="#fff"/><circle cx="12" cy="12" r="4.6" fill="#2FB14C"/><path d="M9.8 12l1.6 1.6 2.8-2.8" fill="none" stroke="#fff" stroke-width="1.1"/></svg><svg class="s" style="left:1118px;top:773px" width="18" height="15" viewBox="0 0 18 15"><rect x="3.5" y="0.6" width="13.5" height="9.5" fill="none" stroke="#fff" stroke-width="1.1"/><path d="M10.3 10v3M6.8 13.5h7" stroke="#fff" stroke-width="1.1"/><rect x="0.6" y="2" width="4.5" height="3.5" fill="#000" stroke="#fff" stroke-width="1"/><path d="M2.8 5.5v9" stroke="#fff" stroke-width="1"/></svg><svg class="s" style="left:1142px;top:773px" width="18" height="15" viewBox="0 0 18 15"><path d="M0.8 5h2.8l4-3.8v12.6l-4-3.8H0.8z" fill="none" stroke="#fff" stroke-width="1"/><path d="M10 5.5a3 3 0 0 1 0 4M12.3 3.5a6 6 0 0 1 0 8M14.6 1.5a9 9 0 0 1 0 12" fill="none" stroke="#fff" stroke-width="1"/></svg><svg class="s" style="left:1238px;top:771px" width="27" height="26" viewBox="0 0 27 26"><path d="M1.5 1.5h16v11.5h-7.5l-3.5 3.5v-3.5H1.5z" fill="#fff"/><path d="M4 4.5h11M4 7h11M4 9.5h7" stroke="#000" stroke-width="1"/><circle cx="18" cy="17" r="7.5" fill="#2B2B2B" stroke="#555" stroke-width="1"/><text x="18" y="21.3" font-family="Liberation Sans" font-size="12" fill="#fff" text-anchor="middle">2</text></svg><div class="r" style="left:1275px;top:760px;width:1px;height:40px;background:#555;"></div>
<div class="t" style="left:85.00px;top:773.90px;font-size:14.3px;line-height:14.3px;color:#A9A9A9;font-family:'Liberation Sans', sans-serif;font-weight:normal;font-style:normal;transform:scaleX(0.9969);transform-origin:0 0;">Type here to search</div>
<div class="t" style="left:1175.00px;top:764.84px;font-size:12px;line-height:12px;color:#fff;font-family:'Liberation Sans', sans-serif;font-weight:normal;font-style:normal;transform:scaleX(0.9174);transform-origin:0 0;">1:53 PM</div>
<div class="t" style="left:1169.50px;top:782.44px;font-size:12px;line-height:12px;color:#fff;font-family:'Liberation Sans', sans-serif;font-weight:normal;font-style:normal;transform:scaleX(0.9811);transform-origin:0 0;">5/11/2017</div>
</body></html>
